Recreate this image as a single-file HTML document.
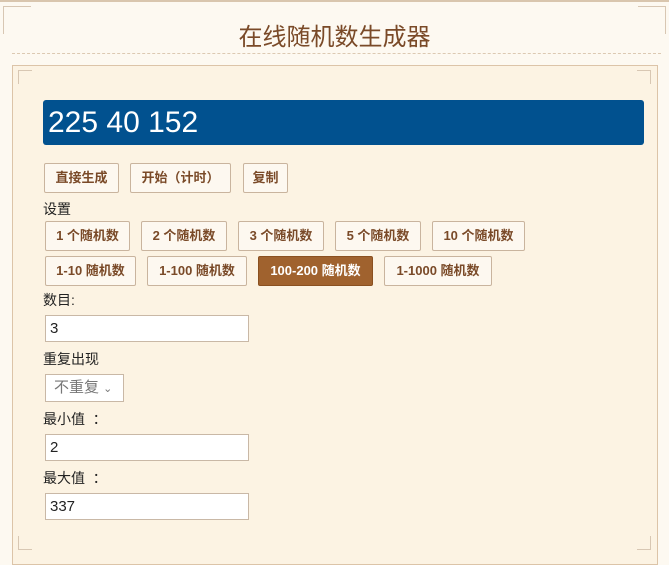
<!DOCTYPE html>
<html><head><meta charset="utf-8"><style>
*{box-sizing:border-box;margin:0;padding:0}
body{width:669px;height:561px;background:#fdf9f1;font-family:"Liberation Sans","Noto Sans CJK SC",sans-serif;position:relative;overflow:hidden;color:#222}
.top{position:absolute;left:0;top:0;width:669px;height:2px;background:#d9c6ae}
h1{position:absolute;left:0;width:669px;top:17px;text-align:center;font-size:24px;font-weight:normal;color:#7a4a28}
.dash{position:absolute;left:12px;right:8px;top:53px;border-top:1px dashed #dcc9b2}
.panel{position:absolute;left:12px;top:65px;width:646px;height:500px;background:#fcf3e3;border:1px solid #dcc4a8}
.res{position:absolute;left:43px;top:100px;width:601px;height:45px;background:#01518f;border-radius:3px;color:#fff;font-size:30px;line-height:45px;padding-left:5px}
.b{position:absolute;height:30px;border:1px solid #c9b49e;background:#fdf8f0;color:#7a4a28;font-size:13px;font-weight:bold;line-height:28px;text-align:center;border-radius:2px}
.b.on{background:#a0622e;color:#fff;border-color:#8a5020}
.l{position:absolute;left:43px;font-size:14px;color:#222}
.in{position:absolute;left:45px;width:204px;height:27px;background:#fff;border:1px solid #c9b8a6;font-size:15px;line-height:25px;padding-left:4px}
.sel{position:absolute;left:45px;top:374px;width:79px;height:28px;background:#fff;border:1px solid #c9b8a6;font-size:15px;line-height:26px;padding-left:8px;color:#777}
.c{position:absolute;border:1px solid #d8c7b3;width:14px;height:14px}
</style></head><body>
<div class="top"></div>
<h1>在线随机数生成器</h1>
<div class="dash"></div>
<div class="panel"></div>
<div class="c" style="left:3px;top:6px;border-right:none;border-bottom:none;width:28px;height:28px"></div>
<div class="c" style="left:638px;top:6px;border-left:none;border-bottom:none;width:28px;height:28px"></div>
<div class="c" style="left:18px;top:70px;border-right:none;border-bottom:none"></div>
<div class="c" style="left:637px;top:70px;border-left:none;border-bottom:none"></div>
<div class="c" style="left:18px;top:536px;border-right:none;border-top:none"></div>
<div class="c" style="left:637px;top:536px;border-left:none;border-top:none"></div>
<div class="res">225 40 152</div>
<div class="b" style="left:44px;top:163px;width:75px">直接生成</div>
<div class="b" style="left:130px;top:163px;width:101px">开始（计时）</div>
<div class="b" style="left:243px;top:163px;width:45px">复制</div>
<div class="l" style="top:199px">设置</div>
<div class="b" style="left:45px;top:221px;width:85px">1 个随机数</div>
<div class="b" style="left:141px;top:221px;width:86px">2 个随机数</div>
<div class="b" style="left:238px;top:221px;width:86px">3 个随机数</div>
<div class="b" style="left:335px;top:221px;width:86px">5 个随机数</div>
<div class="b" style="left:432px;top:221px;width:93px">10 个随机数</div>
<div class="b" style="left:45px;top:256px;width:91px">1-10 随机数</div>
<div class="b" style="left:147px;top:256px;width:100px">1-100 随机数</div>
<div class="b on" style="left:258px;top:256px;width:115px">100-200 随机数</div>
<div class="b" style="left:384px;top:256px;width:108px">1-1000 随机数</div>
<div class="l" style="top:290px">数目:</div>
<div class="in" style="top:315px">3</div>
<div class="l" style="top:349px">重复出现</div>
<div class="sel">不重复 <span style="font-size:11px">⌄</span></div>
<div class="l" style="top:409px">最小值 &nbsp;：</div>
<div class="in" style="top:434px">2</div>
<div class="l" style="top:468px">最大值 &nbsp;：</div>
<div class="in" style="top:493px">337</div>
</body></html>
